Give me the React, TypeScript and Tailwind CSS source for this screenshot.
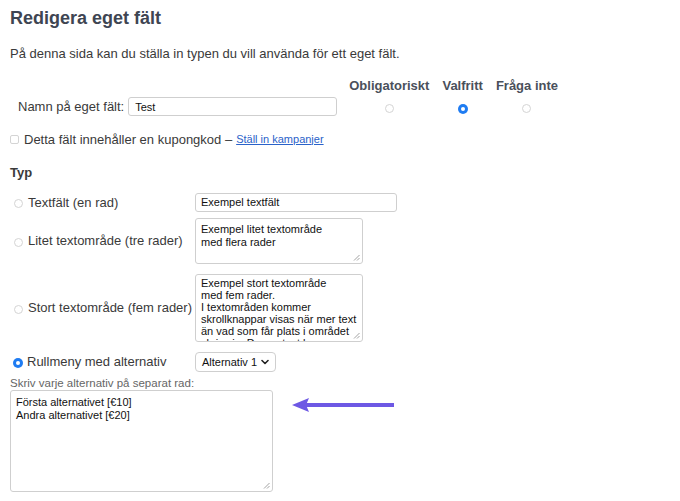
import React from "react";

function Radio({ checked = false }: { checked?: boolean }) {
  if (checked) {
    return (
      <span className="inline-flex h-[10px] w-[10px] shrink-0 items-center justify-center rounded-full bg-[#1f7cf2]">
        <span className="h-[4px] w-[4px] rounded-full bg-white" />
      </span>
    );
  }
  return (
    <span className="inline-block h-[9px] w-[9px] shrink-0 rounded-full border border-[#d4d4d4] bg-white" />
  );
}

function Grip() {
  return (
    <svg className="absolute bottom-[2px] right-[2px]" width="7" height="7" viewBox="0 0 7 7">
      <path d="M6.5 1 L1 6.5 M6.5 4 L4 6.5" stroke="#8a8a8a" strokeWidth="0.8" />
    </svg>
  );
}

export default function App() {
  return (
    <div
      className="relative h-[501px] w-[680px] overflow-hidden bg-white pl-[10px] text-[#333]"
      style={{ fontFamily: '"Liberation Sans", Arial, sans-serif' }}
    >
      <h1 className="pt-[7px] text-[18px] font-bold leading-[22px] text-[#3e4552]">
        Redigera eget fält
      </h1>
      <p className="mt-[17px] text-[13px] leading-[16px] text-[#3a3a3a]">
        På denna sida kan du ställa in typen du vill använda för ett eget fält.
      </p>

      {/* Namn + krav-kolumner */}
      <div className="mt-[16px] flex items-start">
        <div className="mt-[19px] flex items-center pl-[8px]">
          <label className="text-[13px] text-[#3a3a3a]">Namn på eget fält:</label>
          <div className="ml-[4px] flex h-[19px] w-[209px] items-center rounded-[3px] border border-[#cfcfcf] px-[6px] text-[11px] font-medium text-[#111]">
            Test
          </div>
        </div>
        <div className="ml-[12px] grid grid-cols-[auto_auto_auto] gap-x-[13px] gap-y-[8px]">
          {["Obligatoriskt", "Valfritt", "Fråga inte"].map((h) => (
            <div key={h} className="text-center text-[13px] font-bold leading-[16px] text-[#4a505b]">
              {h}
            </div>
          ))}
          <div className="flex justify-center pt-[2px]">
            <Radio />
          </div>
          <div className="flex justify-center pt-[2px]">
            <Radio checked />
          </div>
          <div className="flex justify-center pt-[2px]">
            <Radio />
          </div>
        </div>
      </div>

      <div className="mt-[13px] flex items-center text-[13px] leading-[19px] text-[#3a3a3a]">
        <span className="mr-[5px] inline-block h-[9px] w-[9px] rounded-[2px] border border-[#d4d4d4]" />
        Detta fält innehåller en kupongkod –
        <a className="ml-[4px] text-[11px] text-[#2a62c9] underline">Ställ in kampanjer</a>
      </div>

      <h2 className="mt-[14px] text-[13px] font-bold leading-[19px] text-[#3a3a3a]">Typ</h2>

      {/* Typ-rader */}
      <div className="mt-[11px] grid grid-cols-[185px_auto] items-center gap-y-[6px] text-[13px] text-[#3a3a3a]">
        <div className="flex items-center">
          <span className="ml-[4px] mt-[3px] mr-[5px] flex">
            <Radio />
          </span>
          Textfält (en rad)
        </div>
        <div className="flex h-[19px] w-[202px] items-center rounded-[3px] border border-[#cfcfcf] px-[5px] text-[11px] text-[#111]">
          Exempel textfält
        </div>

        <div className="flex items-center">
          <span className="ml-[4px] mt-[3px] mr-[5px] flex">
            <Radio />
          </span>
          Litet textområde (tre rader)
        </div>
        <div className="relative h-[46px] w-[168px] rounded-[3px] border border-[#cfcfcf] px-[5px] pt-[4px] text-[11px] leading-[12.5px] text-[#111]">
          Exempel litet textområde
          <br />
          med flera rader
          <Grip />
        </div>

        <div className="mt-[4px] flex items-center">
          <span className="ml-[4px] mt-[3px] mr-[5px] flex">
            <Radio />
          </span>
          Stort textområde (fem rader)
        </div>
        <div className="relative mt-[4px] h-[68px] w-[168px] overflow-hidden rounded-[3px] border border-[#cfcfcf] px-[5px] pt-[2px] text-[11px] leading-[12px] text-[#111]">
          Exempel stort textområde
          <br />
          med fem rader.
          <br />
          I textområden kommer
          <br />
          skrollknappar visas när mer text
          <br />
          än vad som får plats i området
          <br />
          skrivs in. Denna text kommer
          <Grip />
        </div>

        <div className="mt-[4px] flex items-center">
          <span className="ml-[3px] mt-[1px] mr-[4px] flex">
            <Radio checked />
          </span>
          Rullmeny med alternativ
        </div>
        <div className="mt-[4px] flex h-[20px] w-[81px] items-center justify-between rounded-[4px] border border-[#cfcfcf] pl-[6px] pr-[6px] text-[11px] text-[#111]">
          Alternativ 1
          <svg width="8" height="6" viewBox="0 0 8 6" fill="none">
            <path d="M1 1.5 L4 4.5 L7 1.5" stroke="#222" strokeWidth="1.6" strokeLinecap="round" strokeLinejoin="round" />
          </svg>
        </div>
      </div>

      <div className="mt-[4px] text-[11.5px] leading-[14px] text-[#666]">
        Skriv varje alternativ på separat rad:
      </div>

      <div className="flex items-start">
        <div className="relative h-[102px] w-[263px] rounded-[3px] border border-[#cfcfcf] px-[5px] pt-[5px] text-[11px] leading-[12.5px] text-[#111]">
          Första alternativet [€10]
          <br />
          Andra alternativet [€20]
          <Grip />
        </div>
        <svg className="ml-[19px] mt-[7px]" width="103" height="16" viewBox="0 0 103 16">
          <path d="M14 6 H102 V10 H14 Z" fill="#6d58e4" />
          <path d="M0 8 L17 1 L14 8 L17 15 Z" fill="#6d58e4" />
        </svg>
      </div>
    </div>
  );
}
